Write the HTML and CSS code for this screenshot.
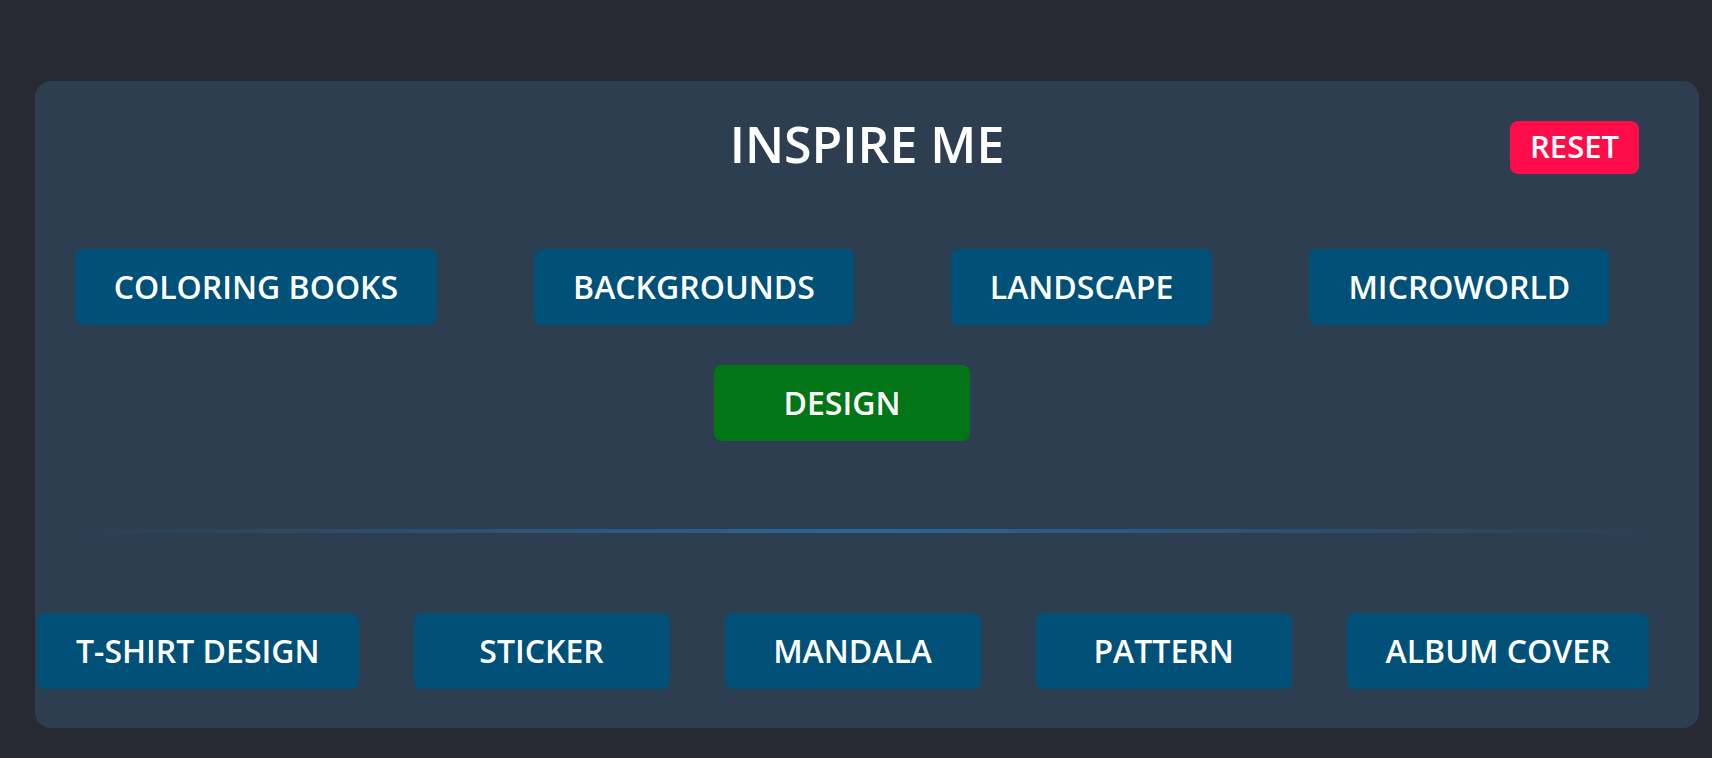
FILE: index.html
```html
<!DOCTYPE html>
<html lang="en">
<head>
<meta charset="utf-8">
<title>Inspire Me</title>
<link rel="stylesheet" href="styles.css">
</head>
<body>
  <section class="panel">
    <header class="panel-header">
      <h1 class="title">INSPIRE ME</h1>
      <button class="reset-btn">RESET</button>
    </header>

    <div class="category-grid">
      <button class="tag-btn">COLORING BOOKS</button>
      <button class="tag-btn">BACKGROUNDS</button>
      <button class="tag-btn">LANDSCAPE</button>
      <button class="tag-btn">MICROWORLD</button>
      <button class="tag-btn tag-active">DESIGN</button>
    </div>

    <hr class="divider">

    <div class="subcategory-row">
      <button class="tag-btn">T-SHIRT DESIGN</button>
      <button class="tag-btn">STICKER</button>
      <button class="tag-btn">MANDALA</button>
      <button class="tag-btn">PATTERN</button>
      <button class="tag-btn">ALBUM COVER</button>
    </div>
  </section>
</body>
</html>
```

FILE: styles.css
```css
* {
  box-sizing: border-box;
}

html, body {
  margin: 0;
  height: 100%;
}

body {
  background: #272a33;
  padding: 81px 13px 0 35px;
  font-family: "Open Sans", "Noto Sans", sans-serif;
  color: #ffffff;
  overflow: hidden;
}

.panel {
  position: relative;
  background: #2d3e50;
  border-radius: 16px;
  padding: 29px 0 39px 0;
  display: flex;
  flex-direction: column;
}

.panel-header {
  display: flex;
  justify-content: center;
}

.title {
  margin: 0;
  font-size: 50px;
  font-weight: 600;
  line-height: 68px;
  letter-spacing: 0;
}

.reset-btn {
  position: absolute;
  top: 40px;
  right: 60px;
  height: 53px;
  padding: 0 20px 2px;
  border: none;
  border-radius: 8px;
  background: #ff0d4b;
  color: #ffffff;
  font-family: inherit;
  font-size: 31px;
  font-weight: 600;
  line-height: 51px;
}

.tag-btn {
  min-width: 256px;
  height: 76px;
  padding: 0 39px 1px;
  border: none;
  border-radius: 8px;
  background: #005078;
  color: #ffffff;
  font-family: inherit;
  font-size: 32px;
  font-weight: 600;
  line-height: 44px;
  white-space: nowrap;
}

.tag-active {
  background: #027517;
}

.category-grid {
  margin: 71px 50px 0 0;
  display: flex;
  flex-wrap: wrap;
  justify-content: center;
  column-gap: 97px;
  row-gap: 40px;
}

.divider {
  margin: 88px 30px 0;
  height: 4px;
  border: none;
  background: linear-gradient(90deg, rgba(42, 102, 152, 0) 0%, #2a6698 50%, rgba(42, 102, 152, 0) 100%);
}

.subcategory-row {
  margin-top: 80px;
  padding-left: 2px;
  display: flex;
  column-gap: 55px;
}
```
